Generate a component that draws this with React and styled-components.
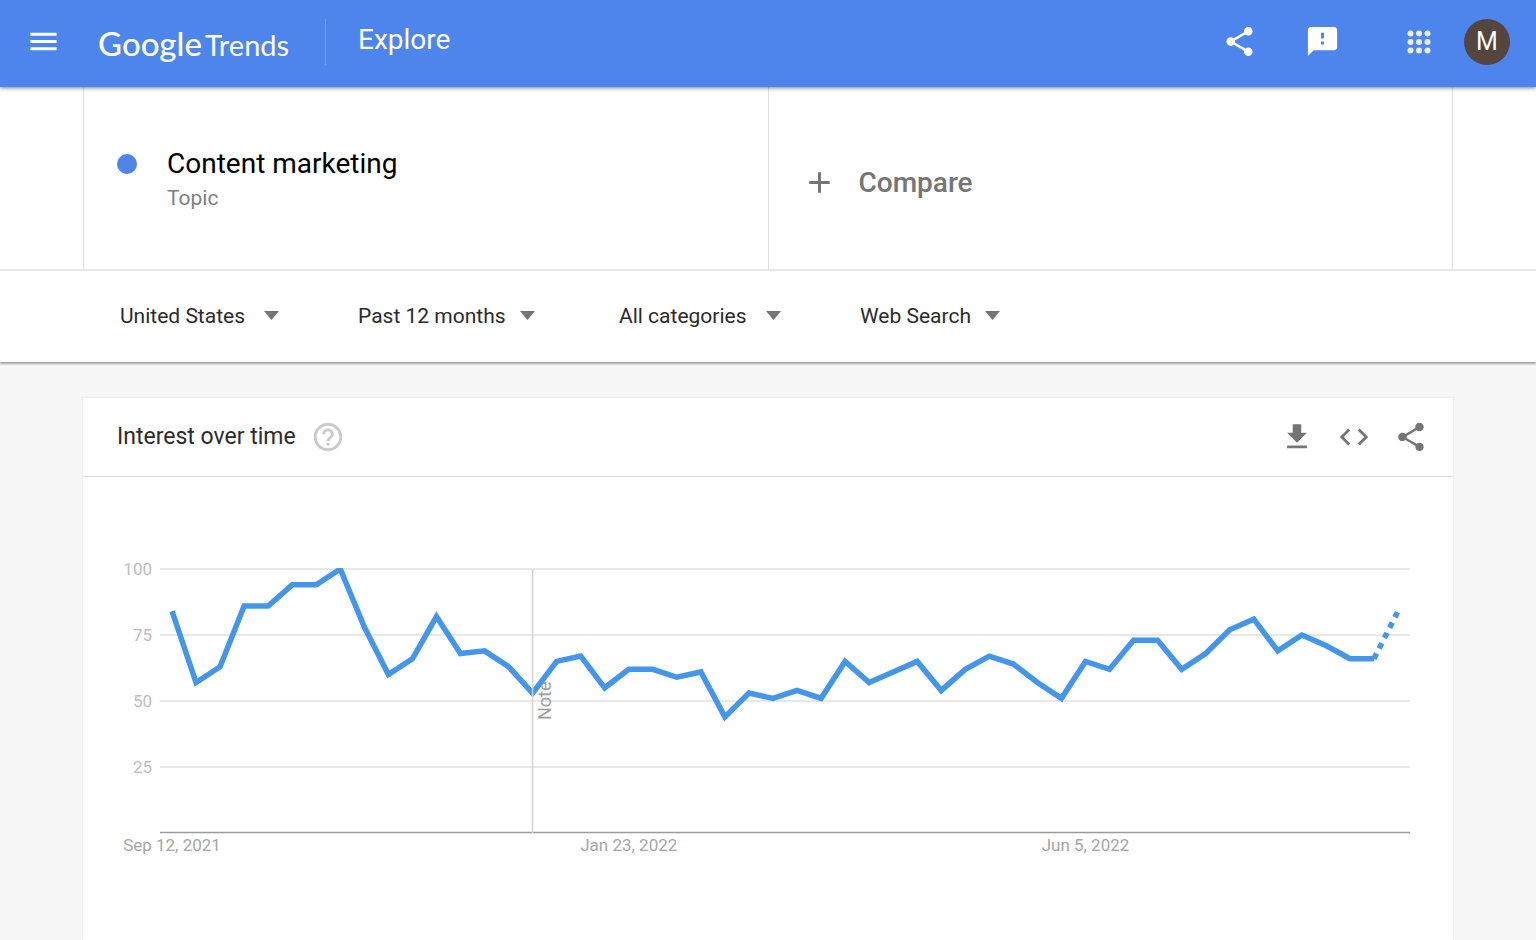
import { useState } from "react";
import styled, { createGlobalStyle } from "styled-components";
import { MdMenu, MdShare, MdFeedback, MdAdd, MdHelpOutline, MdGetApp, MdCode } from "react-icons/md";

const GlobalStyle = createGlobalStyle`
    * {
        box-sizing: border-box;
    }

    body {
        margin: 0;
        background: #f7f7f7;
        color: #2b2b2b;
        font-family: Roboto, "Liberation Sans", sans-serif;
    }
`;

const Page = styled.div`
    display: flex;
    flex-direction: column;
    min-height: 100vh;
`;

const Header = styled.header`
    display: flex;
    align-items: center;
    height: 87px;
    padding: 0 26px 4px;
    background: #4e85ec;
    color: #fff;
    box-shadow: 0 1px 4px rgba(0, 0, 0, 0.5);
    z-index: 1;
`;

const IconButton = styled.button`
    display: flex;
    padding: 0;
    border: none;
    background: none;
    color: ${({ $color }) => $color || "inherit"};
    cursor: pointer;
`;

const Logo = styled.a`
    display: flex;
    align-items: baseline;
    gap: 3px;
    width: 192px;
    margin-left: 37px;
    padding-top: 4px;
    color: #fff;
    font-family: Lato, Roboto, sans-serif;
    text-decoration: none;
    line-height: 40px;
`;

const LogoGoogle = styled.span`
    font-size: 33px;
    font-weight: 500;
`;

const LogoTrends = styled.span`
    font-size: 29px;
`;

const Section = styled.h1`
    display: flex;
    align-items: center;
    height: 46px;
    margin: 0 auto 0 35px;
    padding: 0 32px 4px;
    border-left: 1px solid #729ff1;
    font-size: 28px;
    font-weight: 400;
`;

const HeaderActions = styled.div`
    display: flex;
    align-items: center;
`;

const ShareGroup = styled.div`
    display: flex;
    gap: 48px;
    margin-right: 62px;
`;

const Avatar = styled.button`
    width: 46px;
    height: 46px;
    margin-left: 28px;
    padding: 0;
    border: none;
    border-radius: 50%;
    background: #54453f;
    color: #fff;
    font-family: inherit;
    font-size: 25px;
    cursor: pointer;
`;

const Terms = styled.section`
    padding: 0 83px;
    background: #fff;
    border-bottom: 2px solid #e6e6e6;
`;

const TermsRow = styled.div`
    display: flex;
    height: 182px;
    border-left: 1px solid #e0e0e0;
`;

const Term = styled.div`
    display: flex;
    flex: 1;
    gap: 30px;
    padding: 60px 33px;
    border-right: 1px solid #e0e0e0;
`;

const Dot = styled.span`
    width: 20px;
    height: 20px;
    margin-top: 7px;
    border-radius: 50%;
    background: #4e85ec;
`;

const TermName = styled.div`
    color: #000;
    font-size: 28px;
    line-height: 34px;
`;

const TermKind = styled.div`
    color: #808080;
    font-size: 21px;
    line-height: 34px;
`;

const Compare = styled.button`
    display: flex;
    flex: 1;
    align-items: center;
    gap: 22px;
    padding: 8px 33px 0;
    border: none;
    border-right: 1px solid #e0e0e0;
    background: none;
    color: #757575;
    font-family: inherit;
    font-size: 28px;
    font-weight: 500;
    cursor: pointer;
`;

const Filters = styled.nav`
    display: flex;
    align-items: center;
    gap: 79px;
    height: 91px;
    padding: 0 120px 2px;
    background: #fff;
    box-shadow: 0 2px 2px rgba(0, 0, 0, 0.35);
`;

const Filter = styled.label`
    display: flex;
    align-items: center;
    gap: ${({ $tight }) => ($tight ? "14px" : "19px")};
    padding-right: ${({ $tight }) => ($tight ? "5px" : "0")};
`;

const Select = styled.select`
    appearance: none;
    padding: 0;
    border: none;
    background: none;
    color: #2b2b2b;
    font-family: inherit;
    font-size: 21px;
    line-height: 28px;
    cursor: pointer;
`;

const Content = styled.main`
    display: flex;
    flex: 1;
    flex-direction: column;
    padding: 36px 83px 0;
`;

const Card = styled.section`
    flex: 1;
    background: #fff;
    box-shadow: 0 0 3px rgba(0, 0, 0, 0.08);
`;

const CardHeader = styled.div`
    display: flex;
    align-items: center;
    height: 79px;
    padding: 0 25px 1px 34px;
    border-bottom: 1px solid #dcdcdc;
`;

const CardTitle = styled.h2`
    margin: 0 15px 0 0;
    font-size: 23px;
    font-weight: 400;
`;

const CardActions = styled.div`
    display: flex;
    gap: 23px;
    margin-left: auto;
`;

const Chart = styled.svg`
    display: block;
    width: 100%;
    font-size: 17px;
`;

const FILTERS = [
    { label: "Region", value: "United States" },
    { label: "Period", value: "Past 12 months", tight: true },
    { label: "Category", value: "All categories" },
    { label: "Search type", value: "Web Search", tight: true },
];

const INTEREST = [
    84, 57, 63, 86, 86, 94, 94, 100, 78, 60, 66, 82, 68, 69, 63, 53, 65, 67,
    55, 62, 62, 59, 61, 44, 53, 51, 54, 51, 65, 57, 61, 65, 54, 62, 67, 64,
    57, 51, 65, 62, 73, 73, 62, 68, 77, 81, 69, 75, 71, 66, 66, 84,
];

const DATES = [
    { index: 0, text: "Sep 12, 2021" },
    { index: 19, text: "Jan 23, 2022" },
    { index: 38, text: "Jun 5, 2022" },
];

const NOTE_INDEX = 15;
const LEFT = 77;
const RIGHT = 1327;
const TOP = 92;
const BOTTOM = 356;

const xOf = (i) => LEFT + ((i + 0.5) * (RIGHT - LEFT)) / INTEREST.length;
const yOf = (value) => BOTTOM - (value * (BOTTOM - TOP)) / 100;
const toPoints = (from, to) =>
    INTEREST.slice(from, to)
        .map((value, i) => `${xOf(from + i)},${yOf(value)}`)
        .join(" ");

function AppsIcon() {
    return (
        <svg width="34" height="34" viewBox="0 0 34 34" fill="#e9f0fd" aria-hidden="true">
            {[8.5, 17, 25.5].map((y) =>
                [8.5, 17, 25.5].map((x) => <circle key={`${x}-${y}`} cx={x} cy={y} r="3" />)
            )}
        </svg>
    );
}

function InterestChart() {
    const last = INTEREST.length - 1;

    return (
        <Chart viewBox="0 0 1370 420" role="img" aria-label="Interest over time">
            <clipPath id="plot">
                <rect x={LEFT} y={TOP - 1} width={RIGHT - LEFT} height={BOTTOM - TOP + 1} />
            </clipPath>

            {[100, 75, 50, 25].map((value) => (
                <g key={value}>
                    <line x1={LEFT} x2={RIGHT} y1={yOf(value)} y2={yOf(value)} stroke="#e0e0e0" strokeWidth="1.5" />
                    <text x={LEFT - 8} y={yOf(value) + 6} textAnchor="end" fill="#bdbdbd">{value}</text>
                </g>
            ))}
            <line x1={LEFT} x2={RIGHT} y1={BOTTOM - 0.5} y2={BOTTOM - 0.5} stroke="#9a9a9a" strokeWidth="1.5" />

            <g clipPath="url(#plot)" fill="none" stroke="#4496ed" strokeWidth="5.5">
                <polyline points={toPoints(0, last)} />
                {/* the current week is still incomplete */}
                <polyline points={toPoints(last - 1, last + 1)} strokeDasharray="5.8 5.8" />
            </g>

            <line x1={xOf(NOTE_INDEX)} x2={xOf(NOTE_INDEX)} y1={TOP} y2={BOTTOM} stroke="#d2d2d2" strokeWidth="1.5" />
            <text
                transform={`translate(${xOf(NOTE_INDEX) + 18} 243) rotate(-90)`}
                fill="#9e9e9e"
                fontSize="18"
            >
                Note
            </text>

            {DATES.map(({ index, text }) => (
                <text key={text} x={xOf(index)} y={BOTTOM + 18} textAnchor="middle" fill="#a6a6a6">{text}</text>
            ))}
        </Chart>
    );
}

export default function App() {
    const [filters, setFilters] = useState(FILTERS.map((filter) => filter.value));

    const changeFilter = (index, value) => {
        setFilters(filters.map((current, i) => (i === index ? value : current)));
    };

    return (
        <Page>
            <GlobalStyle />
            <Header>
                <IconButton aria-label="Menu"><MdMenu size={35} /></IconButton>
                <Logo href="#">
                    <LogoGoogle>Google</LogoGoogle>
                    <LogoTrends>Trends</LogoTrends>
                </Logo>
                <Section>Explore</Section>
                <HeaderActions>
                    <ShareGroup>
                        <IconButton aria-label="Share"><MdShare size={35} /></IconButton>
                        <IconButton aria-label="Send feedback"><MdFeedback size={35} /></IconButton>
                    </ShareGroup>
                    <IconButton aria-label="Apps"><AppsIcon /></IconButton>
                    <Avatar aria-label="Account M">M</Avatar>
                </HeaderActions>
            </Header>

            <Terms>
                <TermsRow>
                    <Term>
                        <Dot />
                        <div>
                            <TermName>Content marketing</TermName>
                            <TermKind>Topic</TermKind>
                        </div>
                    </Term>
                    <Compare>
                        <MdAdd size={35} />
                        Compare
                    </Compare>
                </TermsRow>
            </Terms>

            <Filters>
                {FILTERS.map((filter, i) => (
                    <Filter key={filter.label} $tight={filter.tight}>
                        <Select
                            aria-label={filter.label}
                            value={filters[i]}
                            onChange={(e) => changeFilter(i, e.target.value)}
                        >
                            <option>{filter.value}</option>
                        </Select>
                        <svg width="15" height="10" viewBox="0 0 15 10" fill="#757575" aria-hidden="true">
                            <path d="M0 0h15L7.500 9z" />
                        </svg>
                    </Filter>
                ))}
            </Filters>

            <Content>
                <Card>
                    <CardHeader>
                        <CardTitle>Interest over time</CardTitle>
                        <IconButton aria-label="Help" $color="#cacaca"><MdHelpOutline size={34} /></IconButton>
                        <CardActions>
                            <IconButton aria-label="Download" $color="#757575"><MdGetApp size={34} /></IconButton>
                            <IconButton aria-label="Embed" $color="#757575"><MdCode size={34} /></IconButton>
                            <IconButton aria-label="Share chart" $color="#757575"><MdShare size={34} /></IconButton>
                        </CardActions>
                    </CardHeader>
                    <InterestChart />
                </Card>
            </Content>
        </Page>
    );
}
